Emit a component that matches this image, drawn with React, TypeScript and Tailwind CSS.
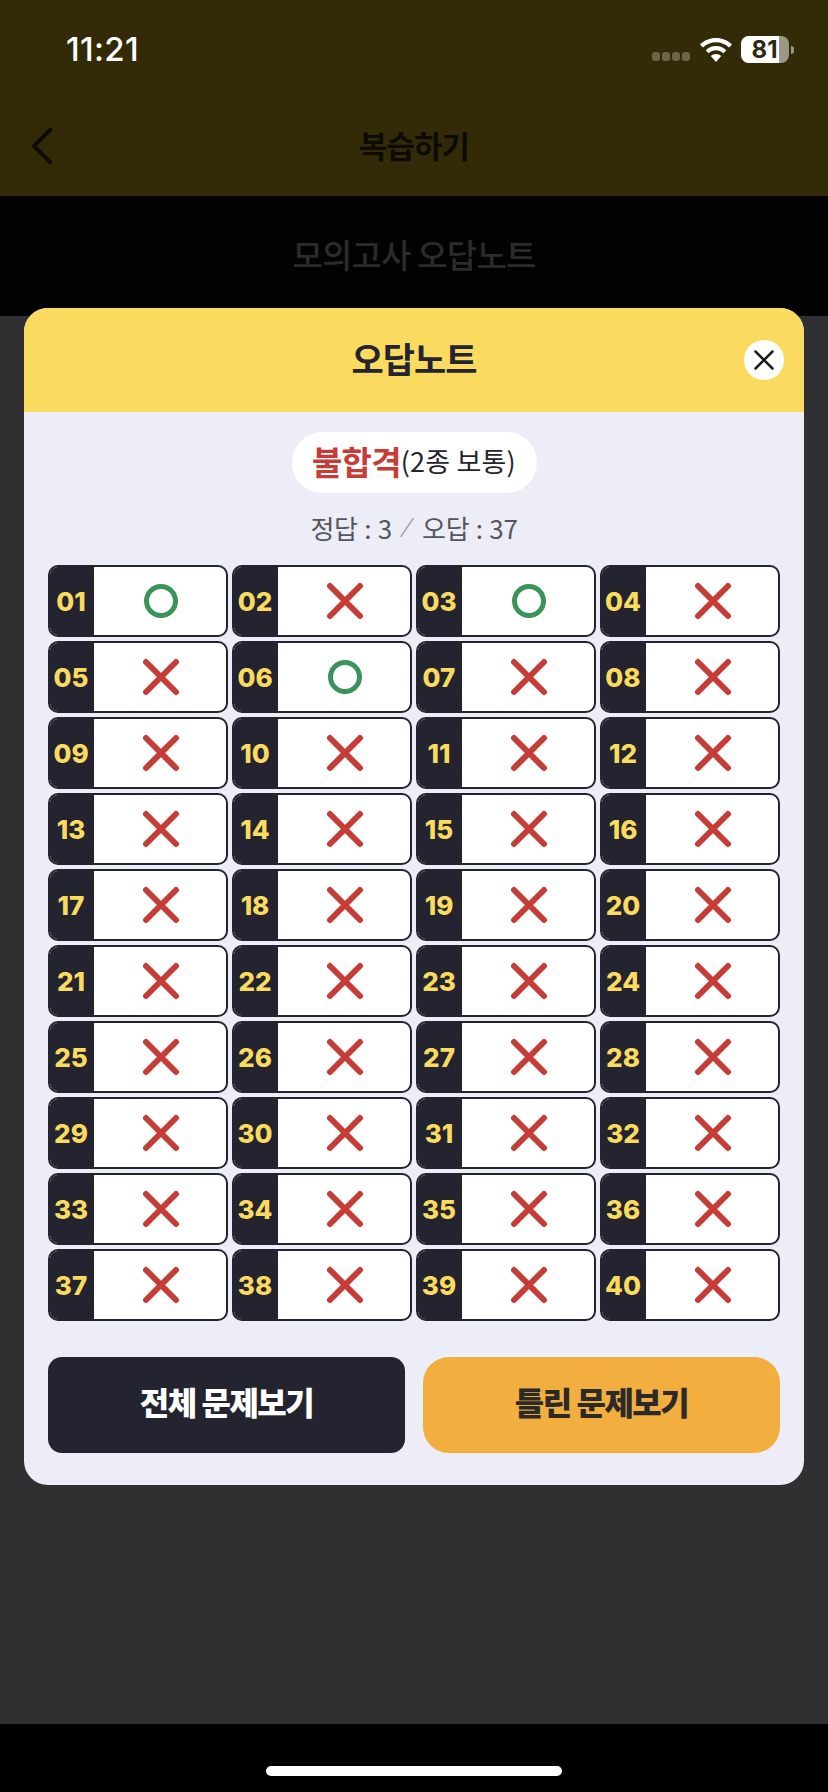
const correct = [1, 3, 6]
const numbers = Array.from({ length: 40 }, (_, i) => i + 1)

function Circle() {
  return (
    <svg viewBox="0 0 36 36" className="h-[36px] w-[36px]" fill="none" stroke="#3c9359" strokeWidth={5}>
      <circle cx="18" cy="18" r="14.5" />
    </svg>
  )
}

function Cross() {
  return (
    <svg viewBox="0 0 38 38" className="h-[38px] w-[38px]" fill="none" stroke="#c63c37" strokeWidth={6} strokeLinecap="round">
      <path d="M4 4l30 30M34 4L4 34" />
    </svg>
  )
}

function Cell({ n }: { n: number }) {
  return (
    <div className="flex h-[72px] overflow-hidden rounded-[10px] border-2 border-[#23242f] bg-white">
      <div className="flex w-[44px] shrink-0 items-center justify-center bg-[#23242f] pr-[2px] font-['Inter',sans-serif] text-[26px] font-extrabold text-[#fadb5f]">
        {String(n).padStart(2, '0')}
      </div>
      <div className="flex flex-1 items-center justify-center pl-[2px]">{correct.includes(n) ? <Circle /> : <Cross />}</div>
    </div>
  )
}

function StatusBar() {
  return (
    <div className="flex h-[100px] items-start justify-between pl-[66px] pr-[34px] pt-[31px]">
      <span className="font-['Inter',sans-serif] text-[33px] font-medium leading-[36px] tracking-[0.3px] text-white">11:21</span>
      <div className="flex items-center pt-[5px]">
        <div className="mt-[14px] flex gap-[2px]">
          <i className="h-[9px] w-[8px] rounded-[3px] bg-[#6a6549]" />
          <i className="h-[9px] w-[8px] rounded-[3px] bg-[#6a6549]" />
          <i className="h-[9px] w-[8px] rounded-[3px] bg-[#6a6549]" />
          <i className="h-[9px] w-[8px] rounded-[3px] bg-[#6a6549]" />
        </div>
        <svg viewBox="0 0 32 24" className="ml-[10px] h-[24px] w-[32px]" fill="#ffffff">
          <path d="M16 0C9.8 0 4.3 2.4 0 6.4l2.9 3.1C6.4 6.2 11 4.2 16 4.2s9.6 2 13.1 5.3L32 6.4C27.7 2.4 22.2 0 16 0z" />
          <path d="M16 8C12 8 8.500 9.600 5.700 12.200l3 3.100C10.600 13.500 13.200 12.300 16 12.300s5.400 1.200 7.300 3l3-3.100C23.500 9.600 20 8 16 8z" />
          <path d="M16 16c-2 0-3.800 .8-5.200 2.100L16 24l5.200-5.900C19.800 16.800 18 16 16 16z" />
        </svg>
        <div className="ml-[9px] flex items-center">
          <div className="relative flex h-[27px] w-[48px] overflow-hidden rounded-[8px] bg-[#9c9887]">
            <div className="w-[38px] bg-white" />
            <span className="absolute inset-0 flex items-center justify-center pr-[1px] font-['Inter',sans-serif] text-[24px] font-bold text-[#2e2a12]">81</span>
          </div>
          <div className="ml-[2px] h-[8px] w-[3px] rounded-r-[3px] bg-[#9c9887]" />
        </div>
      </div>
    </div>
  )
}

export default function App() {
  return (
    <div className="relative flex h-[1792px] w-[828px] flex-col overflow-hidden bg-[#303032] font-['Noto_Sans_CJK_KR',sans-serif]">
      <header className="h-[196px] bg-[#332b08]">
        <StatusBar />
        <div className="relative flex h-[96px] items-center justify-center">
          <svg viewBox="0 0 22 36" className="absolute left-[31px] top-[28px] h-[36px] w-[22px]" fill="none" stroke="#0d0b02" strokeWidth={4} strokeLinecap="round" strokeLinejoin="round">
            <path d="M19 2L3 18l16 16" />
          </svg>
          <h1 className="pb-[6px] text-[31px] font-bold tracking-[-1px] text-[#0d0b02]">복습하기</h1>
        </div>
      </header>
      <div className="flex h-[120px] items-center justify-center bg-[#020202] pb-[3px]">
        <span className="text-[33px] font-medium tracking-[-0.8px] text-[#2b2b2b]">모의고사 오답노트</span>
      </div>
      <div className="flex-1" />
      <div className="flex h-[68px] items-start justify-center bg-black pt-[42px]">
        <div className="h-[10px] w-[296px] rounded-full bg-white" />
      </div>

      <div className="absolute left-[24px] top-[308px] w-[780px] overflow-hidden rounded-[24px] bg-[#ecedf6]">
        <div className="relative flex h-[104px] items-center justify-center bg-[#fadb5f]">
          <h2 className="pb-[4px] text-[35px] font-bold tracking-[-1px] text-[#23242f]">오답노트</h2>
          <button type="button" className="absolute right-[20px] top-[32px] flex h-[40px] w-[40px] items-center justify-center rounded-full bg-white">
            <svg viewBox="0 0 20 20" className="h-[20px] w-[20px]" fill="none" stroke="#1c1c22" strokeWidth={2.5} strokeLinecap="round">
              <path d="M1.500 1.500l17 17M18.500 1.500l-17 17" />
            </svg>
          </button>
        </div>
        <div className="flex flex-col items-center px-[24px] pb-[32px] pt-[20px]">
          <div className="flex h-[61px] w-[245px] items-center justify-center rounded-full bg-white pb-[2px]">
            <span className="text-[33px] font-bold tracking-[-0.8px] text-[#c63c37]">불합격</span>
            <span className="text-[27px] tracking-[0.2px] text-[#23242f]">(2종 보통)</span>
          </div>
          <div className="mt-[18px] flex h-[36px] items-center pb-[4px] text-[26px] tracking-[-0.3px] text-[#55565d] [word-spacing:1px]">
            <span>정답 : 3</span>
            <span className="mx-[13px] font-['Inter',sans-serif] text-[26px] font-light text-[#a2a3aa]">⁄</span>
            <span>오답 : 37</span>
          </div>
          <div className="mt-[18px] grid w-full grid-cols-4 gap-[4px]">
            {numbers.map((n) => (
              <Cell key={n} n={n} />
            ))}
          </div>
          <div className="mt-[36px] grid w-full grid-cols-2 gap-[18px]">
            <button type="button" className="h-[96px] rounded-[14px] bg-[#23242f] pb-[8px] text-[32px] font-black tracking-[-1.5px] text-white">
              전체 문제보기
            </button>
            <button type="button" className="h-[96px] rounded-[26px] bg-[#f2ae3e] pb-[8px] text-[32px] font-black tracking-[-1.5px] text-[#2c2a28]">
              틀린 문제보기
            </button>
          </div>
        </div>
      </div>
    </div>
  )
}
